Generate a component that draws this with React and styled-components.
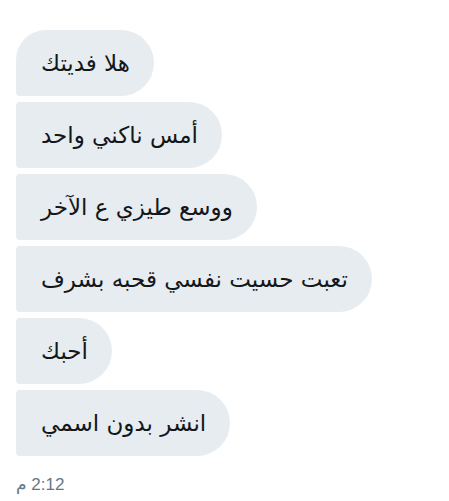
import React from "react"
import styled, { createGlobalStyle } from "styled-components"

const GlobalStyle = createGlobalStyle`
  html, body {
    margin: 0;
    padding: 0;
    background: #fff;
  }
  body {
    font-family: "DejaVu Sans", "Noto Sans", sans-serif;
  }
`

const Thread = styled.div`
  display: flex;
  flex-direction: column;
  align-items: flex-start;
  gap: 6px;
  padding: 30px 16px 0;
`

const Bubble = styled.div`
  direction: rtl;
  background: #e6ecf0;
  color: #14171a;
  font-size: 23px;
  line-height: 26px;
  padding: 20px 24px 20px 25px;
  border-radius: ${(p) => (p.first ? "30px" : "4px")} 33px 33px 4px;
`

const Stamp = styled.div`
  direction: rtl;
  margin-top: 12px;
  font-family: "Liberation Sans", "DejaVu Sans", sans-serif;
  font-size: 17px;
  color: #657786;
`

const messages = [
  "هلا فديتك",
  "أمس ناكني واحد",
  "ووسع طيزي ع الآخر",
  "تعبت حسيت نفسي قحبه بشرف",
  "أحبك",
  "انشر بدون اسمي",
]

const App = () => (
  <>
    <GlobalStyle />
    <Thread>
      {messages.map((m, i) => (
        <Bubble key={i} first={i === 0}>
          {m}
        </Bubble>
      ))}
      <Stamp>2:12 م</Stamp>
    </Thread>
  </>
)

export default App
